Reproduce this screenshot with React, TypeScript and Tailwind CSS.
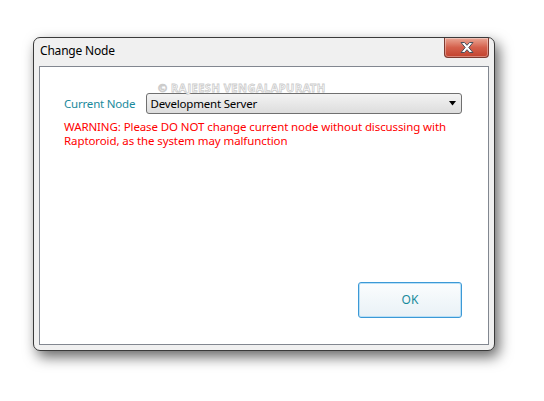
import React from "react";

export default function App() {
  return (
    <div className="w-[544px] h-[401px] bg-white pt-[37px] pl-[33px]" style={{ fontFamily: '"Noto Sans", "Open Sans", sans-serif' }}>
      <div className="relative w-[462px] h-[314px] rounded-[7px] border border-[#3a3a3a] bg-[#f0f0f0] shadow-[4px_6px_14px_rgba(0,0,0,0.6)] flex flex-col px-[5px] pb-[5px]">
        <div className="h-[28px] flex items-start justify-between">
          <span className="pl-[1px] pt-[6px] text-[12px] leading-[14px] tracking-[-0.2px] text-black">Change Node</span>
          <div className="w-[45px] h-[20px] rounded-b-[4px] border border-t-0 border-[#7d3a30] bg-gradient-to-b from-[#e9a594] via-[#d4604c] to-[#c2412d] flex items-center justify-center shadow-[inset_0_0_0_1px_rgba(255,255,255,0.35)]">
            <svg width="16" height="13" viewBox="0 0 16 13">
              <path d="M2 1.5 L5.5 1.5 L8 4.3 L10.5 1.5 L14 1.5 L9.8 6.5 L14 11.5 L10.5 11.5 L8 8.7 L5.5 11.5 L2 11.5 L6.2 6.5 Z" fill="#ffffff" stroke="#4a4f5a" strokeWidth="1" strokeLinejoin="round" />
            </svg>
          </div>
        </div>
        <div className="relative flex-1 border border-[#828790] bg-white flex flex-col pl-[24px] pr-[26px] pt-[26px] pb-[26px]">
          <span className="absolute left-[118px] top-[15px] text-[11px] leading-[12px] font-bold text-white tracking-[0.5px]" style={{ WebkitTextStroke: "0.8px #cccccc" }}>© RAJEESH VENGALAPURATH</span>
          <div className="flex items-center">
            <span className="w-[82px] text-[11.5px] leading-[16px] tracking-[-0.2px] text-[#1a8a9c]">Current Node</span>
            <div className="w-[318px] h-[21px] rounded-[3px] border border-[#707070] bg-gradient-to-b from-[#f3f3f3] to-[#dddddd] flex items-center justify-between pl-[4px] pr-[4px]">
              <span className="text-[11.5px] leading-[14px] tracking-[-0.2px] text-black">Development Server</span>
              <svg width="8" height="5" viewBox="0 0 8 5">
                <path d="M0 0 H7 L3.5 4.5 Z" fill="#000000" />
              </svg>
            </div>
          </div>
          <p className="mt-[6px] text-[11.5px] leading-[14px] tracking-[-0.1px] text-[#ff0000] w-[400px]">
            WARNING: Please DO NOT change current node without discussing with Raptoroid, as the system may malfunction
          </p>
          <div className="flex-1" />
          <div className="flex justify-end">
            <div className="w-[104px] h-[36px] rounded-[3px] border border-[#3c99d6] bg-gradient-to-b from-[#fbfdfe] to-[#e9f1f6] shadow-[inset_0_0_0_1px_#b9e0f7] flex items-center justify-center">
              <span className="text-[12px] leading-[14px] text-[#1a8a9c]">OK</span>
            </div>
          </div>
        </div>
      </div>
    </div>
  );
}
